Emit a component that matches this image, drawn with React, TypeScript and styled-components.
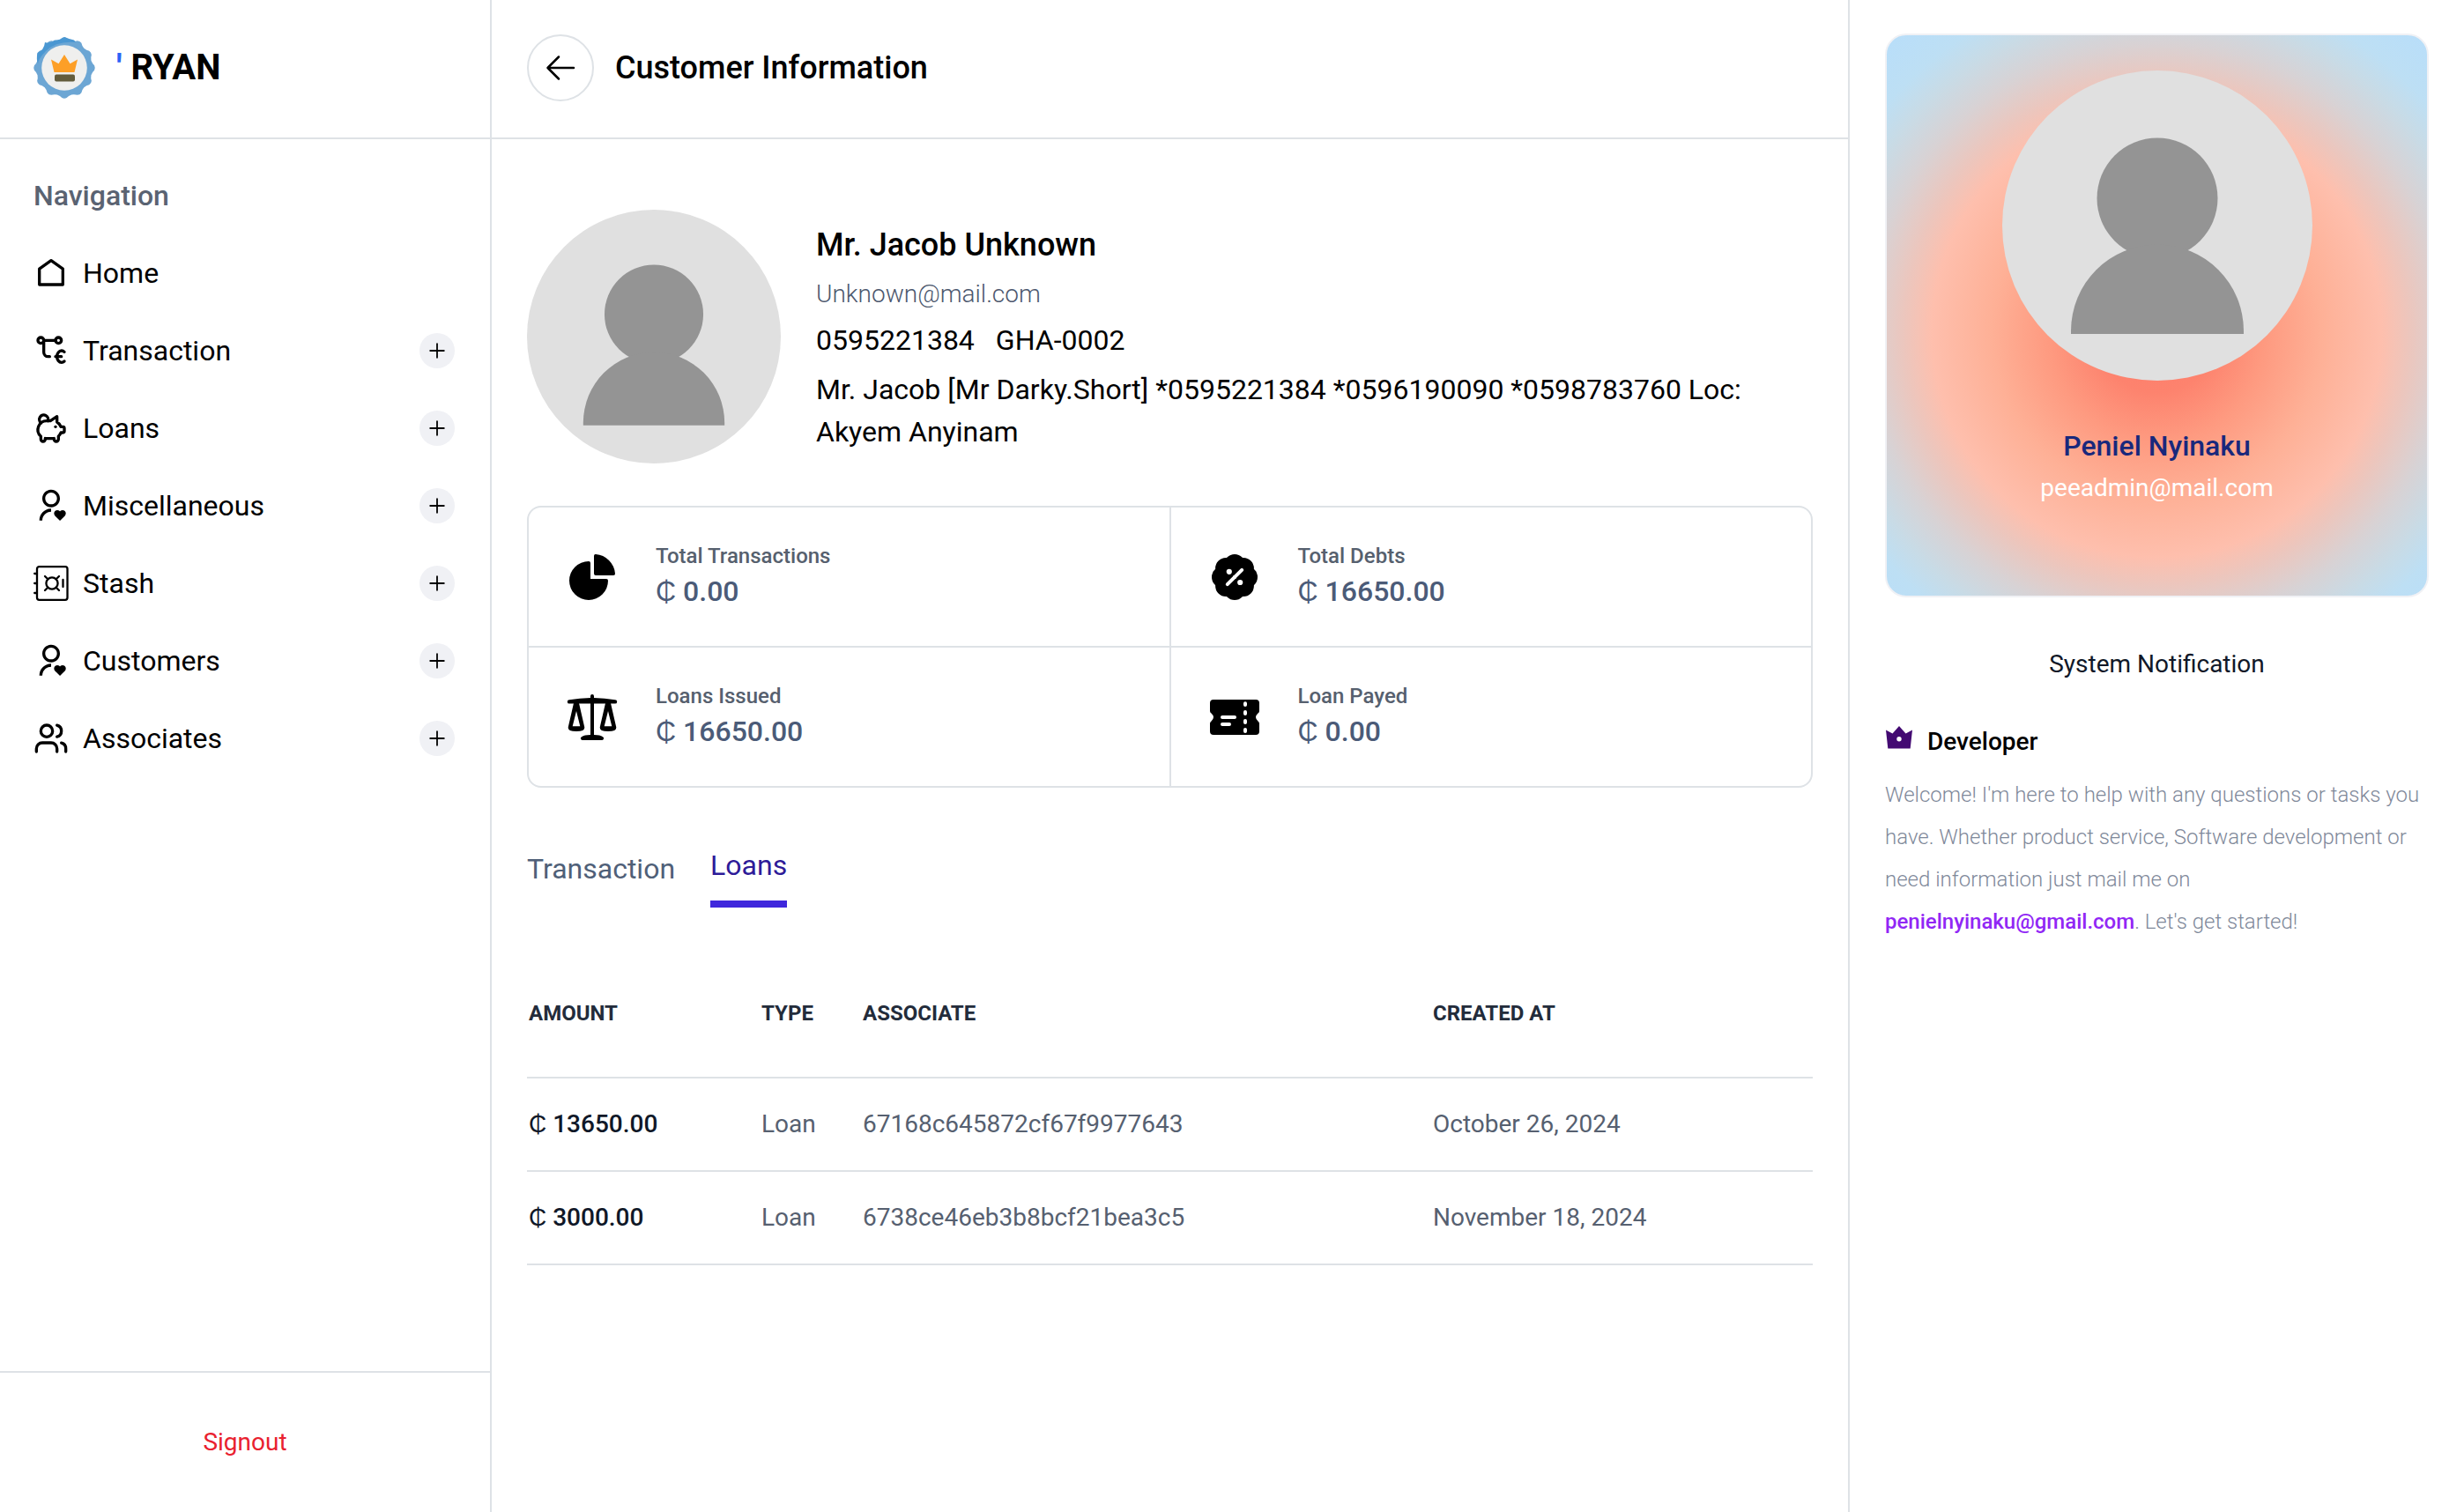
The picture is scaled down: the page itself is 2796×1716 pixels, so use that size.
import React from "react";
import styled, { createGlobalStyle, css } from "styled-components";
import { TbPigMoney, TbTransactionEuro } from "react-icons/tb";
import { RiUserHeartLine } from "react-icons/ri";
import { Users } from "lucide-react";

const line = "#dee2e6";

const GlobalStyle = createGlobalStyle`
  *, *::before, *::after { box-sizing: border-box; }
  body {
    margin: 0;
    background: #ffffff;
    color: #000000;
    font-family: Roboto, "Liberation Sans", sans-serif;
    font-size: 32px;
    line-height: 48px;
  }
  h1, h2, h3, p, ul, dl, dd { margin: 0; padding: 0; }
  ul { list-style: none; }
  button { font: inherit; color: inherit; background: none; border: 0; padding: 0; cursor: pointer; }
  a { color: inherit; text-decoration: none; }
  svg { display: block; flex: none; }
`;

const Page = styled.div`
  display: grid;
  grid-template-columns: 558px minmax(0, 1fr) 697px;
  min-height: 100vh;
`;

const Sidebar = styled.aside`
  display: flex;
  flex-direction: column;
  border-right: 2px solid ${line};
`;

const Brand = styled.header`
  display: flex;
  align-items: center;
  gap: 22px;
  height: 158px;
  padding: 0 36px 2px;
  border-bottom: 2px solid ${line};
`;

const BrandName = styled.span`
  font-size: 40px;
  font-weight: 700;
`;

const Tick = styled.span`
  color: #2b63f6;
`;

const Nav = styled.nav`
  flex: 1;
  padding: 40px 40px 0 38px;
`;

const NavTitle = styled.h2`
  font-size: 32px;
  font-weight: 500;
  color: #5a6372;
  margin-bottom: 40px;
`;

const NavList = styled.ul`
  display: flex;
  flex-direction: column;
  gap: 40px;
`;

const NavItem = styled.li`
  display: flex;
  align-items: center;
  justify-content: space-between;
  height: 48px;
`;

const NavLink = styled.a`
  display: flex;
  align-items: center;
  gap: 16px;
`;

const AddButton = styled.button`
  display: flex;
  align-items: center;
  justify-content: center;
  width: 40px;
  height: 40px;
  border-radius: 50%;
  background: #f0f1f5;
`;

const SideFooter = styled.footer`
  display: flex;
  align-items: center;
  justify-content: center;
  height: 160px;
  border-top: 2px solid ${line};
`;

const Signout = styled.button`
  font-size: 28px;
  color: #e9212f;
`;

const Main = styled.main`
  border-right: 2px solid ${line};
`;

const TopBar = styled.header`
  display: flex;
  align-items: center;
  gap: 24px;
  height: 158px;
  padding: 0 40px 2px;
  border-bottom: 2px solid ${line};
`;

const BackButton = styled.button`
  display: flex;
  align-items: center;
  justify-content: center;
  width: 76px;
  height: 76px;
  border: 2px solid ${line};
  border-radius: 50%;
`;

const Title = styled.h1`
  font-size: 36px;
  font-weight: 500;
`;

const Content = styled.div`
  padding: 80px 40px;
`;

const Profile = styled.section`
  display: flex;
  align-items: center;
  gap: 40px;
`;

const ProfileText = styled.div`
  flex: 1;
  display: flex;
  flex-direction: column;
  gap: 8px;
`;

const ProfileName = styled.h2`
  font-size: 36px;
  line-height: 56px;
  font-weight: 500;
`;

const ProfileMail = styled.p`
  font-size: 28px;
  line-height: 40px;
  font-weight: 300;
  color: #4d586e;
`;

const ProfileIds = styled.p`
  display: flex;
  gap: 24px;
`;

const Stats = styled.dl`
  display: grid;
  grid-template-columns: 1fr 1fr;
  gap: 2px;
  margin-top: 48px;
  border: 2px solid ${line};
  border-radius: 16px;
  background: ${line};
  overflow: hidden;
`;

const Stat = styled.div`
  display: flex;
  align-items: center;
  gap: 40px;
  height: 157px;
  padding: 0 40px;
  background: #ffffff;
`;

const StatLabel = styled.dt`
  font-size: 24px;
  line-height: 32px;
  font-weight: 500;
  color: #56606e;
`;

const StatValue = styled.dd`
  font-size: 32px;
  font-weight: 500;
  color: #4b5b78;
`;

const Tabs = styled.div`
  display: flex;
  align-items: center;
  gap: 40px;
  margin-top: 64px;
`;

const Tab = styled.button<{ $active?: boolean }>`
  padding-bottom: 16px;
  color: #4f6078;
  ${(p) =>
    p.$active &&
    css`
      color: #2e1b98;
      border-bottom: 8px solid #3f27dc;
    `}
`;

const Table = styled.table`
  width: 100%;
  margin-top: 48px;
  table-layout: fixed;
  border-collapse: collapse;
  text-align: left;
  font-size: 28px;
  color: #566070;
`;

const Col = styled.col<{ $width?: number }>`
  width: ${(p) => (p.$width ? `${p.$width}px` : "auto")};
`;

const Row = styled.tr`
  border-bottom: 2px solid ${line};
`;

const HeadCell = styled.th`
  height: 145px;
  padding: 0 2px;
  font-size: 24px;
  font-weight: 700;
  color: #232c3b;
  text-transform: uppercase;
`;

const Cell = styled.td<{ $strong?: boolean }>`
  height: 106px;
  padding: 0 2px;
  ${(p) =>
    p.$strong &&
    css`
      font-weight: 500;
      color: #101828;
    `}
`;

const Aside = styled.aside`
  padding: 38px 40px;
`;

const UserCard = styled.section`
  display: flex;
  flex-direction: column;
  align-items: center;
  height: 640px;
  padding-top: 40px;
  border: 2px solid #f0f1f5;
  border-radius: 24px;
  background: radial-gradient(
    circle farthest-corner at 50% 53%,
    #ff7a6b 0%,
    #fd836e 15%,
    #fe9a80 27%,
    #feb096 41%,
    #febfad 56%,
    #ecc6bd 63%,
    #d8d2d4 72%,
    #c8dbe6 81%,
    #bddff4 88%,
    #b8defa 100%
  );
`;

const UserName = styled.h2`
  margin-top: 50px;
  font-size: 32px;
  font-weight: 500;
  color: #18287c;
`;

const UserMail = styled.p`
  font-size: 28px;
  color: #ffffff;
`;

const Notice = styled.h3`
  margin-top: 52px;
  font-size: 28px;
  font-weight: 400;
  text-align: center;
  color: #101828;
`;

const DevTitle = styled.h3`
  display: flex;
  align-items: center;
  gap: 16px;
  margin-top: 40px;
  font-size: 28px;
  font-weight: 500;
`;

const DevText = styled.p`
  margin-top: 12px;
  font-size: 24px;
  font-weight: 300;
  color: #7f899a;
`;

const DevMail = styled.a`
  font-weight: 500;
  color: #9127f5;
`;

const Avatar = ({ size }: { size: number }) => (
  <svg width={size} height={size} viewBox="0 0 352 352" role="img" aria-label="Profile photo">
    <circle cx="176" cy="176" r="176" fill="#e0e0e0" />
    <g fill="#949494">
      <circle cx="176" cy="145" r="68.5" />
      <path d="M78 299v-3.500a98 98 0 0 1 196 0V299z" />
    </g>
  </svg>
);

const scallop = (n: number, cx: number, cy: number, outer: number, inner: number) => {
  const at = (r: number, a: number) =>
    `${(cx + r * Math.sin(a)).toFixed(2)} ${(cy - r * Math.cos(a)).toFixed(2)}`;
  let d = "";
  for (let i = 0; i < n; i++) {
    const a = (i * 2 * Math.PI) / n;
    const h = Math.PI / n;
    if (i === 0) d += `M${at(inner, a - h)}`;
    d += `Q${at(inner + 0.6, a - h * 0.55)} ${at(outer - 0.8, a - h * 0.3)}`;
    d += `Q${at(outer + 0.4, a)} ${at(outer - 0.8, a + h * 0.3)}`;
    d += `Q${at(inner + 0.6, a + h * 0.55)} ${at(inner, a + h)}`;
  }
  return d + "Z";
};

const Logo = () => (
  <svg width="74" height="74" viewBox="0 0 74 74" aria-hidden="true">
    <path d={scallop(12, 37, 37, 35, 31.5)} fill="#6ca6d4" />
    <path
      d="M7 32Q5 28 6.500 20Q14 17 15 8Q21 10 26 5.500Q31 6 37 2Q43 4.500 48 5.500L50 8Q28 6 16 18Q8 26 7 32z"
      fill="#4a97d2"
    />
    <circle cx="37" cy="37" r="25.800" fill="#efefee" />
    <path d="M22 27.500l8.500 4.800L37 22l6.500 10.300 8.500-4.800L48.500 42h-23z" fill="#fd9f27" />
    <rect x="26" y="44.500" width="23" height="8" rx="2" fill="#635c3d" />
  </svg>
);

const HomeIcon = () => (
  <svg width="40" height="40" viewBox="0 0 40 40" fill="none" stroke="#000" strokeWidth="3.300" strokeLinejoin="round" aria-hidden="true">
    <path d="M20 5.700L33.300 15.200V33H6.700V15.200z" />
  </svg>
);

const SafeIcon = () => (
  <svg width="40" height="40" viewBox="0 0 40 40" fill="none" stroke="#000" strokeWidth="2.300" strokeLinecap="round" aria-hidden="true">
    <rect x="4" y="1.200" width="34.500" height="37.600" rx="2.500" />
    <path d="M1.200 9H4M1.200 20H4M1.200 31H4" />
    <circle cx="21" cy="20" r="6.600" />
    <path d="M13 12l3.300 3.300M29 12l-3.300 3.300M13 28l3.300-3.300M29 28l-3.300-3.300M33.500 16v8" />
  </svg>
);

const PlusIcon = () => (
  <svg width="24" height="24" viewBox="0 0 24 24" stroke="#000" strokeWidth="1.800" strokeLinecap="round" aria-hidden="true">
    <path d="M12 4.200v15.600M4.200 12h15.600" />
  </svg>
);

const BackIcon = () => (
  <svg width="40" height="40" viewBox="0 0 40 40" fill="none" stroke="#000" strokeWidth="2.500" strokeLinecap="round" strokeLinejoin="round" aria-hidden="true">
    <path d="M35 20H5.500M18 7.500L5.500 20 18 32.500" />
  </svg>
);

const PieIcon = () => (
  <svg width="64" height="64" viewBox="0 0 64 64" aria-hidden="true">
    <path d="M28 14q2 0 2 2v18h18q2 0 2 2a22 22 0 1 1-22-22z" />
    <path d="M34 8q0-2.200 2-2a24 24 0 0 1 22 22q0.200 2-2 2H36q-2 0-2-2z" />
  </svg>
);

const ScaleIcon = () => (
  <svg width="64" height="64" viewBox="0 0 64 64" aria-hidden="true">
    <path d="M30 8a2 2 0 0 1 4 0v2q12 .4 24 2.200a2.200 2.200 0 0 1 0 4.400H34V52q7 0 10 2.200a2 2 0 0 1-1 3.800H21a2 2 0 0 1-1-3.800Q23 52 30 52V16.600H6a2.200 2.200 0 0 1 0-4.400Q18 10.400 30 10z" />
    {[14, 50].map((x) => (
      <path
        key={x}
        fillRule="evenodd"
        d={`M${x - 3} 16h6l6.300 27.500q.4 4.500-9.300 4.500t-9.300-4.500zM${x} 25l-4.300 17.300h8.600z`}
      />
    ))}
  </svg>
);

const PercentIcon = () => (
  <svg width="64" height="64" viewBox="0 0 64 64" aria-hidden="true">
    {[0, 45, 90, 135, 180, 225, 270, 315].map((a) => (
      <circle key={a} cx="32" cy="18" r="12" transform={`rotate(${a} 32 32)`} />
    ))}
    <path d="M23.800 40.200L40.200 23.800" stroke="#fff" strokeWidth="4" strokeLinecap="round" />
    <circle cx="25.800" cy="25.800" r="3.100" fill="#fff" />
    <circle cx="38.200" cy="38" r="3.100" fill="#fff" />
  </svg>
);

const TicketIcon = () => (
  <svg width="64" height="64" viewBox="0 0 64 64" aria-hidden="true">
    <path d="M8 12h48q4 0 4 4v9q0 1.500-1.500 2.500-5 4.500 0 9Q60 37.500 60 39v9q0 4-4 4H8q-4 0-4-4v-9q0-1.500 1.500-2.500 5-4.500 0-9Q4 26.500 4 25v-9q0-4 4-4z" />
    <g stroke="#fff" strokeWidth="4" strokeLinecap="round">
      <path d="M18 32h14M18 40h8" />
      <path d="M44 16.300v1.700M44 26v2M44 36v2M44 46v2" />
    </g>
  </svg>
);

const CrownIcon = () => (
  <svg width="32" height="40" viewBox="0 0 32 40" aria-hidden="true">
    <path
      fill="#430a72"
      fillRule="evenodd"
      d="M1 6.500l7.500 4L16 2 23.500 10.500 31 6.500l-2.300 21H3.300zM16 14a2.700 2.700 0 1 0 0 5.400 2.700 2.700 0 0 0 0-5.400z"
    />
  </svg>
);

const navItems = [
  { label: "Home", icon: <HomeIcon />, add: false },
  { label: "Transaction", icon: <TbTransactionEuro size={40} />, add: true },
  { label: "Loans", icon: <TbPigMoney size={40} />, add: true },
  { label: "Miscellaneous", icon: <RiUserHeartLine size={40} />, add: true },
  { label: "Stash", icon: <SafeIcon />, add: true },
  { label: "Customers", icon: <RiUserHeartLine size={40} />, add: true },
  { label: "Associates", icon: <Users size={40} />, add: true },
];

const stats = [
  { label: "Total Transactions", value: "₵ 0.00", icon: <PieIcon /> },
  { label: "Total Debts", value: "₵ 16650.00", icon: <PercentIcon /> },
  { label: "Loans Issued", value: "₵ 16650.00", icon: <ScaleIcon /> },
  { label: "Loan Payed", value: "₵ 0.00", icon: <TicketIcon /> },
];

const loans = [
  { amount: "₵ 13650.00", type: "Loan", associate: "67168c645872cf67f9977643", created: "October 26, 2024" },
  { amount: "₵ 3000.00", type: "Loan", associate: "6738ce46eb3b8bcf21bea3c5", created: "November 18, 2024" },
];

export default function App() {
  return (
    <>
      <GlobalStyle />
      <Page>
        <Sidebar>
          <Brand>
            <Logo />
            <BrandName>
              <Tick>'</Tick> RYAN
            </BrandName>
          </Brand>
          <Nav aria-label="Main">
            <NavTitle>Navigation</NavTitle>
            <NavList>
              {navItems.map((item) => (
                <NavItem key={item.label}>
                  <NavLink href="#">
                    {item.icon}
                    {item.label}
                  </NavLink>
                  {item.add && (
                    <AddButton type="button" aria-label={`Expand ${item.label}`}>
                      <PlusIcon />
                    </AddButton>
                  )}
                </NavItem>
              ))}
            </NavList>
          </Nav>
          <SideFooter>
            <Signout type="button">Signout</Signout>
          </SideFooter>
        </Sidebar>

        <Main>
          <TopBar>
            <BackButton type="button" aria-label="Back">
              <BackIcon />
            </BackButton>
            <Title>Customer Information</Title>
          </TopBar>
          <Content>
            <Profile>
              <Avatar size={288} />
              <ProfileText>
                <ProfileName>Mr. Jacob Unknown</ProfileName>
                <ProfileMail>Unknown@mail.com</ProfileMail>
                <ProfileIds>
                  <span>0595221384</span>
                  <span>GHA-0002</span>
                </ProfileIds>
                <p>Mr. Jacob [Mr Darky.Short] *0595221384 *0596190090 *0598783760 Loc: Akyem Anyinam</p>
              </ProfileText>
            </Profile>

            <Stats>
              {stats.map((s) => (
                <Stat key={s.label}>
                  {s.icon}
                  <div>
                    <StatLabel>{s.label}</StatLabel>
                    <StatValue>{s.value}</StatValue>
                  </div>
                </Stat>
              ))}
            </Stats>

            <Tabs role="tablist">
              <Tab type="button" role="tab" aria-selected={false}>
                Transaction
              </Tab>
              <Tab type="button" role="tab" aria-selected $active>
                Loans
              </Tab>
            </Tabs>

            <Table>
              <colgroup>
                <Col $width={264} />
                <Col $width={115} />
                <Col $width={647} />
                <Col />
              </colgroup>
              <thead>
                <Row>
                  <HeadCell>Amount</HeadCell>
                  <HeadCell>Type</HeadCell>
                  <HeadCell>Associate</HeadCell>
                  <HeadCell>Created at</HeadCell>
                </Row>
              </thead>
              <tbody>
                {loans.map((l) => (
                  <Row key={l.associate}>
                    <Cell $strong>{l.amount}</Cell>
                    <Cell>{l.type}</Cell>
                    <Cell>{l.associate}</Cell>
                    <Cell>{l.created}</Cell>
                  </Row>
                ))}
              </tbody>
            </Table>
          </Content>
        </Main>

        <Aside>
          <UserCard>
            <Avatar size={352} />
            <UserName>Peniel Nyinaku</UserName>
            <UserMail>peeadmin@mail.com</UserMail>
          </UserCard>
          <Notice>System Notification</Notice>
          <DevTitle>
            <CrownIcon />
            Developer
          </DevTitle>
          <DevText>
            Welcome! I'm here to help with any questions or tasks you have. Whether product service, Software
            development or need information just mail me on{" "}
            <DevMail href="mailto:penielnyinaku@gmail.com">penielnyinaku@gmail.com</DevMail>. Let's get started!
          </DevText>
        </Aside>
      </Page>
    </>
  );
}
